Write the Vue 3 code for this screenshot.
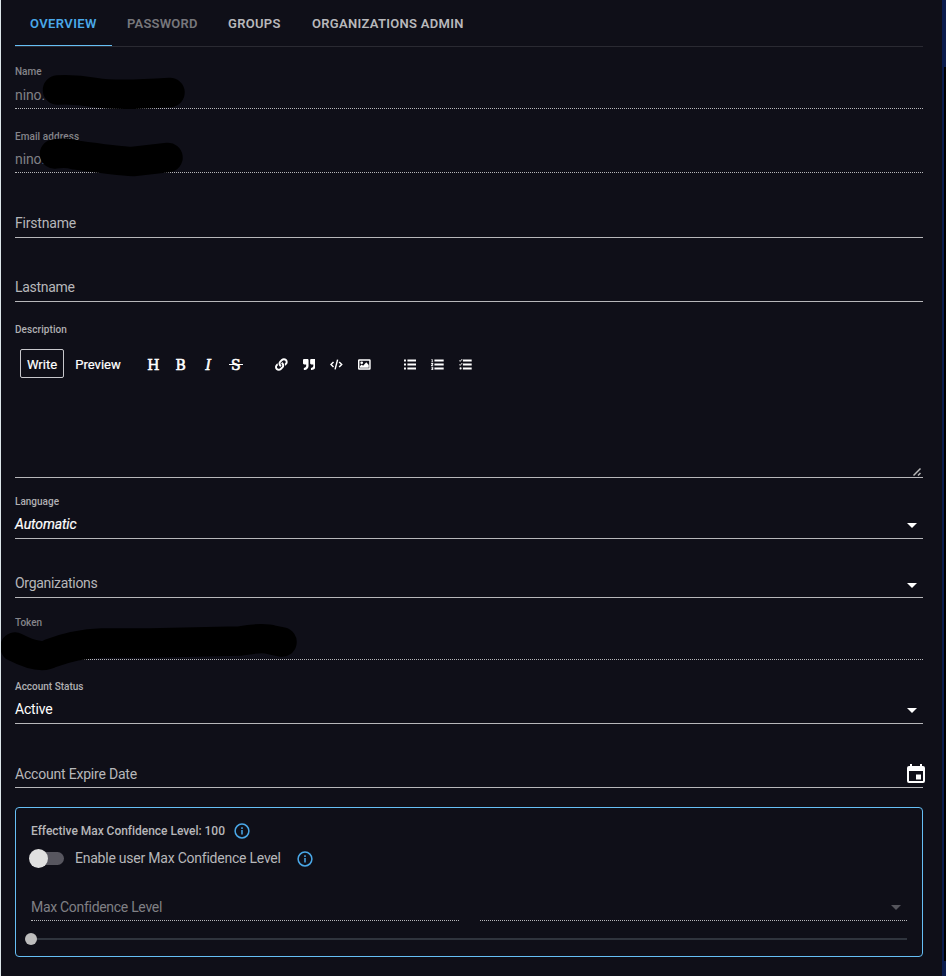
<script setup>
const tabs = [
  { name: 'OVERVIEW', cls: 'active' },
  { name: 'PASSWORD', cls: 'muted' },
  { name: 'GROUPS', cls: 'groups' },
  { name: 'ORGANIZATIONS ADMIN', cls: 'admin' },
]
</script>

<template>
  <div class="page">
    <nav class="tabs">
      <div v-for="t in tabs" :key="t.name" class="tab" :class="t.cls"><span>{{ t.name }}</span></div>
    </nav>

    <div class="field h-name disabled">
      <label class="l-name">Name</label>
      <div class="value nino">nino.</div>
    </div>
    <div class="field h-email disabled">
      <label class="l-email">Email address</label>
      <div class="value nino">nino.</div>
    </div>
    <div class="field h-first"><div class="value hint t-first">Firstname</div></div>
    <div class="field h-last"><div class="value hint t-last">Lastname</div></div>

    <section class="editor">
      <label class="l-desc">Description</label>
      <div class="toolbar">
        <button class="write"><span>Write</span></button>
        <button class="preview"><span>Preview</span></button>
        <div class="group g1">
          <i class="glyph">H</i><i class="glyph">B</i><i class="glyph it">I</i><i class="glyph strike">S</i>
        </div>
        <div class="group g2">
          <svg viewBox="0 0 512 512"><path d="M326.612 185.391c59.747 59.809 58.927 155.698.36 214.59-.11.12-.24.25-.36.37l-67.2 67.2c-59.27 59.27-155.699 59.262-214.96 0-59.27-59.26-59.27-155.7 0-214.96l37.106-37.106c9.84-9.84 26.786-3.3 27.294 10.606.648 17.722 3.826 35.527 9.69 52.721 1.986 5.822.567 12.262-3.783 16.612l-13.087 13.087c-28.026 28.026-28.905 73.66-1.155 101.96 28.024 28.579 74.086 28.749 102.325.51l67.2-67.19c28.191-28.191 28.073-73.757 0-101.83-3.701-3.694-7.429-6.564-10.341-8.569a16.037 16.037 0 0 1-6.947-12.606c-.396-10.567 3.348-21.456 11.698-29.806l21.054-21.055c5.521-5.521 14.182-6.199 20.584-1.731a152.482 152.482 0 0 1 20.522 17.197zM467.547 44.449c-59.261-59.262-155.69-59.27-214.96 0l-67.2 67.2c-.12.12-.25.25-.36.37-58.566 58.892-59.387 154.781.36 214.59a152.454 152.454 0 0 0 20.521 17.196c6.402 4.468 15.064 3.789 20.584-1.731l21.054-21.055c8.35-8.35 12.094-19.239 11.698-29.806a16.037 16.037 0 0 0-6.947-12.606c-2.912-2.005-6.64-4.875-10.341-8.569-28.073-28.073-28.191-73.639 0-101.83l67.2-67.19c28.239-28.239 74.3-28.069 102.325.51 27.75 28.3 26.872 73.934-1.155 101.96l-13.087 13.087c-4.35 4.35-5.769 10.79-3.783 16.612 5.864 17.194 9.042 34.999 9.69 52.721.509 13.906 17.454 20.446 27.294 10.606l37.106-37.106c59.271-59.259 59.271-155.699.001-214.959z" /></svg>
          <svg viewBox="0 0 512 512"><path d="M464 32H336c-26.5 0-48 21.5-48 48v128c0 26.5 21.5 48 48 48h80v64c0 35.3-28.7 64-64 64h-8c-13.3 0-24 10.7-24 24v48c0 13.3 10.7 24 24 24h8c88.4 0 160-71.6 160-160V80c0-26.5-21.5-48-48-48zm-288 0H48C21.5 32 0 53.5 0 80v128c0 26.5 21.5 48 48 48h80v64c0 35.3-28.7 64-64 64h-8c-13.3 0-24 10.7-24 24v48c0 13.3 10.7 24 24 24h8c88.4 0 160-71.6 160-160V80c0-26.5-21.5-48-48-48z" /></svg>
          <svg viewBox="0 0 13 13" class="line"><path d="M3.6 3.9 1 6.5l2.6 2.6M9.4 3.9 12 6.5 9.4 9.1M7.8 1.5 5.2 11.5" /></svg>
          <svg viewBox="0 0 13 13"><path fill-rule="evenodd" d="M1.2 1.2h10.6q1.2 0 1.2 1.2v8.2q0 1.2-1.2 1.2H1.2Q0 11.8 0 10.6V2.4q0-1.200 1.200-1.200zM1.500 2.700v7.600h10V2.700z" /><circle cx="3.800" cy="4.700" r="1.400" /><path d="M2 9.800V8.200l1.700-1.800 1.500 1.400 3.300-3.700 2.500 2.900v2.800z" /></svg>
        </div>
        <div class="group g3">
          <svg viewBox="0 0 13 13"><path d="M0 1.500h2v2H0zM0 5.500h2v2H0zM0 9.500h2v2H0zM3.500 1.500H13v2H3.500zM3.500 5.500H13v2H3.500zM3.500 9.500H13v2H3.500z" /></svg>
          <svg viewBox="0 0 13 13"><path d="M.4 1h1.300v2.600h.6v.7H.2v-.7h.6V1.800H.4zM.2 5h2.100v1.300L1.200 7.200h1.100V8H.1v-.9l1.300-1H.2zM.2 8.800h2.100v3.400H.2v-.8h1.200v-.5H.6v-.7h.8v-.6H.2zM3.500 1.500H13v2H3.500zM3.500 5.500H13v2H3.500zM3.500 9.500H13v2H3.500z" /></svg>
          <svg viewBox="0 0 13 13"><path d="M4 1.500h9v2H4zM4 5.500h9v2H4zM4 9.500h9v2H4z" /><path class="tick" d="m.2 2.300 1 1L3.200 1M.2 6.400l1 1 2-2.300" /><circle cx="1.600" cy="10.500" r="1.100" /></svg>
        </div>
      </div>
      <svg class="grip" viewBox="0 0 10 10"><path d="M1.500 8.500 8.500 1.500M6 8.500 8.500 6" /></svg>
    </section>

    <div class="field h-lang">
      <label class="l-lang">Language</label>
      <div class="value t-auto">Automatic</div><b class="caret"></b>
    </div>
    <div class="field h-org"><div class="value hint t-org">Organizations</div><b class="caret low"></b></div>
    <div class="field h-token disabled"><label class="l-token">Token</label><div class="value nino">••••</div></div>
    <div class="field h-status">
      <label class="l-status">Account Status</label>
      <div class="value t-active">Active</div><b class="caret"></b>
    </div>
    <div class="field h-expire">
      <div class="value hint t-expire">Account Expire Date</div>
      <svg class="calendar" viewBox="0 0 18 20"><path fill-rule="evenodd" d="M3 0h2v2h8V0h2v2h1q2 0 2 2v13q0 2-2 2H2q-2 0-2-2V4q0-2 2-2h1zM2 7v10h14V7z" /><path d="M9 10.500h5v5H9z" /></svg>
    </div>

    <section class="card">
      <div class="effective">
        <span class="t-eff">Effective Max Confidence Level: 100</span>
        <svg class="info" viewBox="0 0 16 16"><circle cx="8" cy="8" r="6.900" /><path d="M8 7v4.500M8 4.300v1.600" /></svg>
      </div>
      <div class="enable">
        <span class="switch"><span></span></span>
        <span class="t-enable">Enable user Max Confidence Level</span>
        <svg class="info" viewBox="0 0 16 16"><circle cx="8" cy="8" r="6.900" /><path d="M8 7v4.500M8 4.300v1.600" /></svg>
      </div>
      <div class="levels">
        <div class="level"><span class="t-max">Max Confidence Level</span></div>
        <div class="level"><b class="caret dim"></b></div>
      </div>
      <div class="slider"><span class="rail"></span><span class="thumb"></span></div>
    </section>

    <svg class="redaction" viewBox="0 0 300 700">
      <path d="M57.500 90Q75 89 95 92.500T170 92.500" />
      <path d="M54.500 154Q66 152 76 155Q118 161 133 161.500L168 157.500" />
      <path d="M15 647Q40 660 50 653.500Q75 644 102 643H150L240 641Q263 637 272 640L282 642" />
    </svg>
    <div class="edge"></div>
  </div>
</template>

<style>
body { background: #0f0f18; overflow: hidden; }
</style>

<style scoped>
* { box-sizing: border-box; }
.page { position: relative; width: 946px; height: 976px; overflow: hidden; padding: 0 23px 0 14px; border-left: 1px solid #dde6ea; background: #0f0f18; font-family: Roboto, "Liberation Sans", sans-serif; color: #fff; font-size: 14px; }
.page > :not(.redaction):not(.edge) { width: 908px; }
.tabs { display: flex; height: 47px; border-bottom: 1px solid #2a2a32; font-size: 13px; font-weight: 600; color: #b8b8bb; white-space: nowrap; }
.tab { height: 46px; line-height: 46px; padding-top: 1px; letter-spacing: .3px; }
.tab.active { width: 97px; padding-left: 15px; color: #4aa8e8; border-bottom: 1px solid #66bff5; letter-spacing: .4px; }
.tab.muted { width: 101px; padding-left: 15px; color: #77777c; letter-spacing: .2px; }
.tab.groups { width: 84px; padding-left: 15px; }
.tab.admin { padding-left: 15px; }
.field { position: relative; display: flex; flex-direction: column; justify-content: flex-end; border-bottom: 1px solid #b7b7ba; }
.value { height: 18px; line-height: 18px; margin-bottom: 5px; white-space: nowrap; letter-spacing: -.2px; }
.hint { color: #b7b7ba; }
label { font-size: 10px; line-height: 12px; height: 12px; color: #b0b0b3; white-space: nowrap; margin-bottom: 7px; font-weight: 500; letter-spacing: 0; display: block; }
.disabled { border-bottom-style: dotted; color: #808085; }
.disabled label { color: #85858a; }
.disabled .value { margin-bottom: 4px; }
.nino { letter-spacing: 0; }
.h-name { height: 62px; }
.disabled label { margin-bottom: 8px; }
.h-email { height: 64px; }
.h-email label { margin-bottom: 7px; letter-spacing: .08px; }
.h-first { height: 65px; }
.h-last { height: 64px; }
.h-lang { height: 61px; }
.h-org { height: 59px; }
.h-token { height: 62px; }
.h-status { height: 64px; }
.h-expire { height: 64px; }
.h-expire .value { margin-bottom: 4px; }
.disabled .value.nino { letter-spacing: -.1px; }
.value.t-auto { font-style: italic; letter-spacing: -.1px; -webkit-text-stroke: .2px #fff; }
.value.t-last, .value.t-org { letter-spacing: -.3px; }
.value.t-expire { letter-spacing: -.2px; }
.editor { position: relative; height: 176px; padding-top: 22px; border-bottom: 1px solid #b7b7ba; }
.toolbar { display: flex; align-items: center; height: 29px; margin: 0 0 0 5px; }
label.l-desc { margin-bottom: 13px; letter-spacing: .08px; }
button { height: 29px; padding: 1px 0 0; color: #fff; background: none; border: 0; border-radius: 2px; font: 13px Roboto, sans-serif; text-align: center; white-space: nowrap; -webkit-text-stroke: .2px #fff; }
.write { width: 44px; border: 1px solid #c8c8cc; }
.preview { width: 68px; }
.group { display: flex; align-items: center; padding-top: 1px; }
.g1 { margin-left: 7.500px; padding-top: 2px; }
.g2 { margin-left: 25.500px; gap: 15px; }
.g3 { margin-left: 33px; gap: 15px; }
.group svg { width: 12.700px; height: 13px; fill: #fff; }
.group svg.line { fill: none; stroke: #fff; stroke-width: 1.500; }
.group svg .tick { fill: none; stroke: #fff; stroke-width: 1; }
.glyph { width: 27.500px; font: normal 14px/16px "DejaVu Serif", serif; text-align: center; -webkit-text-stroke: .6px #fff; }
.glyph.it { font-style: italic; }
.glyph.strike { position: relative; }
.glyph.strike::after { content: ""; position: absolute; left: 7px; right: 7px; top: 7px; height: 1.500px; background: #fff; }
.grip { position: absolute; right: 1px; bottom: 0; width: 10px; height: 10px; fill: none; stroke: #b8b8b8; stroke-width: 1.500; }
.caret { position: absolute; right: 6px; bottom: 10px; border: 5px solid transparent; border-top-color: #fff; border-bottom: 0; }
.caret.low { bottom: 9px; }
.calendar { position: absolute; right: -2px; bottom: 3px; width: 18px; height: 20px; fill: #fff; }
.card { height: 150px; margin-top: 19px; border: 1px solid #66bff5; border-radius: 4px; padding: 15px 15px 0; }
.effective { display: flex; align-items: center; height: 16px; gap: 9px; font-size: 12px; font-weight: 500; color: #b7b7ba; white-space: nowrap; }
.t-eff { width: 194px; letter-spacing: -.03px; }
.info { width: 16px; height: 16px; fill: none; stroke: #4aa8e8; stroke-width: 1.500; }
.enable { display: flex; align-items: center; height: 20px; margin-top: 9px; color: #b7b7ba; white-space: nowrap; }
.switch { position: relative; width: 33px; height: 13px; border-radius: 7px; background: #57565f; margin-right: 11px; }
.switch span { position: absolute; left: -2px; top: -3px; width: 19px; height: 19px; border-radius: 50%; background: #e0e0e0; }
.t-enable { width: 206px; letter-spacing: -.23px; }
.enable .info { margin: 2px 0 0 16px; }
.levels { display: flex; gap: 21px; height: 53px; }
.level { position: relative; flex: 1; display: flex; align-items: flex-end; border-bottom: 1px dotted #b7b7ba; color: #808085; line-height: 18px; padding-bottom: 4px; }
.t-max { letter-spacing: -.3px; }
.caret.dim { border-top-color: #55555c; }
.slider { position: relative; height: 36px; padding-top: 17px; }
.rail { display: block; height: 2px; background: #2f343d; }
.thumb { position: absolute; left: -6px; top: 12px; width: 12px; height: 12px; border-radius: 50%; background: #bdbdbd; }
.redaction { position: absolute; left: -1px; top: 0; width: 300px; height: 700px; fill: none; stroke: #000; stroke-width: 29.500; stroke-linecap: round; stroke-linejoin: round; }
.edge { position: absolute; right: 0; top: 67px; width: 4px; height: 894px; background: linear-gradient(90deg, #0b1c4c 50%, #000 50%); box-shadow: 0 -100px 0 0 #0b1c4c, 0 100px 0 0 #0b1c4c; }
</style>
